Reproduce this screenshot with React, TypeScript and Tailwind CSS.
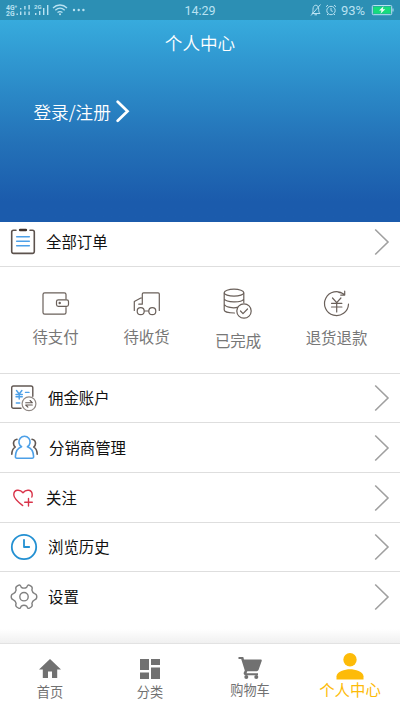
import React from "react";

type IconProps = { box: string; w: number; h: number; color?: string; sw?: number; children: React.ReactNode };

function Icon({ box, w, h, color = "#6a605a", sw = 1.3, children }: IconProps) {
  return (
    <svg viewBox={box} width={w} height={h} fill="none" stroke={color} strokeWidth={sw} strokeLinecap="round" strokeLinejoin="round" className="block shrink-0">
      {children}
    </svg>
  );
}

function StatusBar() {
  return (
    <div className="relative h-5 bg-[#2c8fb4] text-[#b9e2f2]">
      <svg width="90" height="20" viewBox="0 0 90 20" className="block" fill="currentColor">
        <text x="6" y="9.5" fontSize="6.800" fontWeight="bold" fontFamily="Roboto, sans-serif">4G⁺</text>
        <text x="6" y="16" fontSize="6.800" fontWeight="bold" fontFamily="Roboto, sans-serif">2G</text>
        <path d="M16.500 13.500h1.400v1.500h-1.400zM20 11.500h1.400V15H20zM24.200 11.500h1.400V15h-1.400zM28.400 11.500h1.400V15h-1.400zM20 8h1.400v1.500H20zM24.200 6h1.400v3.500h-1.400zM28.400 5h1.400v4.500h-1.400z" />
        <text x="34" y="9" fontSize="6" fontWeight="bold" fontFamily="Roboto, sans-serif">2G</text>
        <path d="M35 13h1.400v2H35zM39 11h1.400v4H39zM43 8h1.400v7H43zM47 5h1.400v10H47z" />
        <g fill="none" stroke="currentColor" strokeWidth="1.300">
          <path d="M53 8c4-4 10-4 14 0M55.300 10.300c3-2.700 6.500-2.700 9.400 0M57.500 12.600c1.700-1.400 3.300-1.400 5 0" />
        </g>
        <circle cx="60" cy="14.300" r="1" />
        <circle cx="74" cy="10" r="1.200" />
        <circle cx="78.700" cy="10" r="1.200" />
        <circle cx="83.400" cy="10" r="1.200" />
      </svg>
      <span className="absolute inset-x-0 top-[1px] text-center font-[Roboto] text-[12.5px] leading-5">14:29</span>
      <div className="absolute right-0 top-0">
        <svg width="92" height="20" viewBox="308 0 92 20" fill="none" stroke="currentColor" strokeWidth="1" className="block">
          <path d="M312 13.500h8c-1.300-1.300-1.300-2.600-1.300-4.300 0-2.400-1.300-4-2.900-4s-2.800 1.600-2.800 4c0 1.700 0 3-1 4.300zM314.500 14.800h2.500M311 15.500l9.500-11" />
          <circle cx="331" cy="10.500" r="4.200" />
          <path d="M331 8v2.700l1.800.7M326 6.800l2-1.800M336 6.800l-2-1.800M328 14l-1 1M334 14l1 1" />
          <text x="341" y="14.500" fontSize="13" stroke="none" fill="currentColor" fontFamily="Roboto, sans-serif">93%</text>
          <rect x="372.300" y="5.500" width="19.400" height="9.200" rx="1" />
          <rect x="373.300" y="6.500" width="17.400" height="7.200" fill="#16dc7c" stroke="none" />
          <path d="M393 8.500v3" />
          <path d="M383.500 6.300l-4.500 4.200h2.500l-1 3.300 4.800-4.500h-2.500z" fill="#e8fff5" stroke="none" />
        </svg>
      </div>
    </div>
  );
}

function Chevron() {
  return (
    <svg width="16" height="28" viewBox="0 0 16 28" fill="none" stroke="#a0a0a0" strokeWidth="1.600" className="ml-auto mr-[10.500px] block shrink-0">
      <path d="M1.200 1.500L14 14 1.200 26.500" />
    </svg>
  );
}

function Row({ icon, label, className }: { icon: React.ReactNode; label: string; className: string }) {
  return (
    <div className={"flex items-center pl-2 text-[15.4px] text-[#111] " + className}>
      {icon}
      <span className="pb-[2px] leading-5">{label}</span>
      <Chevron />
    </div>
  );
}

function Quick({ icon, label, className }: { icon: React.ReactNode; label: string; className: string }) {
  return (
    <div className={"flex flex-col items-center text-[15.4px] leading-5 text-[#777] " + className}>
      {icon}
      <span>{label}</span>
    </div>
  );
}

export default function App() {
  return (
    <div className="flex h-[711px] w-[400px] flex-col overflow-hidden bg-white font-['Noto_Sans_CJK_SC','Noto_Sans',sans-serif]">
      <StatusBar />
      <header className="flex h-[202px] shrink-0 flex-col bg-linear-to-b from-[#37abdd] from-0% via-[#2472b8] via-60% to-[#1b5bac] to-90% text-white">
        <h1 className="pt-[11px] text-center text-[17.6px] font-[350] leading-6">个人中心</h1>
        <div className="mt-[45px] flex items-center pl-[33.5px] text-[17.6px] font-[350] leading-6">
          登录/注册
          <svg width="16" height="24" viewBox="0 0 16 24" fill="none" stroke="white" strokeWidth="2.700" strokeLinecap="round" className="ml-1 block">
            <path d="M2.700 1.800L12.500 11.300 2.700 20.800" />
          </svg>
        </div>
      </header>

      <Row
        className="h-[45px] shrink-0 border-b border-[#dedede] pb-[5px]"
        label="全部订单"
        icon={
          <div className="mr-[6px]">
            <Icon box="8 226 32 32" w={32} h={32} color="#5c524d" sw={1.6}>
              <path d="M16 230.300h-2.500a1.800 1.800 0 0 0-1.800 1.800v19.500a1.800 1.800 0 0 0 1.800 1.800h19a1.800 1.800 0 0 0 1.800-1.800v-19.500a1.800 1.800 0 0 0-1.800-1.800H30" />
              <path d="M20.200 230h5.600" stroke="#40332e" strokeWidth="2.700" />
              <path d="M16.700 236.700h12.600M16.700 241.200h12.600M16.700 245.700h12.600" stroke="#4da0e8" />
            </Icon>
          </div>
        }
      />

      <section className="flex h-[107px] shrink-0 border-b border-[#dedede] pl-[10px] pt-[18px]">
        <Quick
          className="w-[91px] [&>span]:mt-[7px]"
          label="待支付"
          icon={
            <Icon box="40 285 32 34" w={32} h={34} sw={1.2}>
              <path d="M66 299v-4.500a1.700 1.700 0 0 0-1.700-1.700H44.700a1.700 1.700 0 0 0-1.700 1.700v18a1.700 1.700 0 0 0 1.700 1.700h19.600a1.700 1.700 0 0 0 1.700-1.700v-5" />
              <rect x="56.500" y="299.800" width="12" height="6.500" rx="1.800" />
              <circle cx="59.700" cy="303" r=".6" fill="#736a63" />
            </Icon>
          }
        />
        <Quick
          className="w-[91px] [&>span]:mt-[7px]"
          label="待收货"
          icon={
            <Icon box="131 285 32 34" w={32} h={34} sw={1.2}>
              <path d="M134.300 310.500v-9l6.500-3.500h1.500V294a1.200 1.200 0 0 1 1.200-1.200h14.600a1.200 1.200 0 0 1 1.200 1.200v16.500M142.300 298v6.200h-3.500" />
              <circle cx="140.700" cy="311.200" r="3.500" />
              <circle cx="152.300" cy="311.200" r="3.500" />
              <path d="M144.500 311h4" />
            </Icon>
          }
        />
        <Quick
          className="w-[92px] [&>span]:mt-[11px]"
          label="已完成"
          icon={
            <Icon box="222 285 32 34" w={32} h={34} sw={1.2}>
              <ellipse cx="234" cy="292.700" rx="9.800" ry="3.500" />
              <path d="M224.200 293v17c0 1.500 4 3 10.300 3M224.200 299c2 3.500 17 4.200 19.600 0M224.200 304.500c2 3 9 4 14 2.700M243.800 293v9.500" />
              <circle cx="244" cy="311" r="7.200" fill="white" />
              <path d="M240.500 311l2.500 2.600 4.500-4.600" />
            </Icon>
          }
        />
        <Quick
          className="w-[105px] [&>span]:mt-[8px]"
          label="退货退款"
          icon={
            <Icon box="321 285 32 34" w={32} h={34} sw={1.2}>
              <path d="M344 294.200a12 12 0 1 0 4.500 10M338.500 292.300c2 .2 3.800.8 5.500 1.900M344.700 291.200v3.900h-4" />
              <path d="M332.500 298l4.200 4.700 4.200-4.700M336.700 303v9M331.500 303.300h10.400M331.500 307h10.400" />
            </Icon>
          }
        />
      </section>

      <Row
        className="h-[49px] shrink-0 border-b border-[#dedede]"
        label="佣金账户"
        icon={
          <div className="mr-[8px]">
            <Icon box="8 382 32 32" w={32} h={32} color="#625853" sw={1.4}>
              <path d="M21 408.300h-7.500a1.800 1.800 0 0 1-1.800-1.800v-18.700a1.800 1.800 0 0 1 1.800-1.800h17.500a1.800 1.800 0 0 1 1.800 1.800v8.500" />
              <path d="M16.500 390.500l2.700 3.500 2.700-3.500M19.200 394v5M16 394.500h6.300M16 396.800h6.300M25.500 392.400h3.500M16.300 403h3.500" stroke="#4da0e8" />
              <circle cx="29" cy="403.700" r="6.900" stroke="#8f8884" strokeWidth="1.200" fill="white" />
              <path d="M25.700 402.700h6.600l-2.200-2.200M32.300 405h-6.600l2.200 2.200" strokeWidth="1.100" />
            </Icon>
          </div>
        }
      />
      <Row
        className="h-[50px] shrink-0 border-b border-[#dedede]"
        label="分销商管理"
        icon={
          <div className="mr-[9px]">
            <Icon box="8 432 32 32" w={32} h={32} color="#625853" sw={1.6}>
              <path d="M17 439.300c-2.800.3-4.100 3-3.200 5.600.3 1 .9 1.600 1.400 2.200-2.500 1.300-3.300 3.600-3.400 7.200M32 439.300c2.800.3 4.100 3 3.200 5.600-.3 1-.9 1.600-1.400 2.200 2.500 1.300 3.300 3.600 3.400 7.200" />
              <path d="M21.600 446.700c-4.700 1.500-6 5-6.200 9.800a1.500 1.500 0 0 0 1.500 1.700h15.200a1.500 1.500 0 0 0 1.500-1.700c-.2-4.800-1.500-8.300-6.200-9.800a5.600 5.600 0 1 0-5.800 0z" stroke="#4da0e8" strokeWidth="1.600" />
            </Icon>
          </div>
        }
      />
      <Row
        className="h-[50px] shrink-0 border-b border-[#dedede]"
        label="关注"
        icon={
          <div className="mr-[6px]">
            <Icon box="8 481 32 32" w={32} h={32} color="#d9344a" sw={1.4}>
              <path d="M22.700 504.500c-3.700-2.800-8.700-6.500-8.900-10.500-.2-5.600 6-6.200 9.200-2.200 3.200-4 9.300-3.400 9.200 2.200 0 .8-.1 1.300-.4 2M28.500 497.500v7.500M24.700 501.300h7.600" />
            </Icon>
          </div>
        }
      />
      <Row
        className="h-[49px] shrink-0 border-b border-[#dedede]"
        label="浏览历史"
        icon={
          <div className="mr-[8px]">
            <Icon box="8 531 32 32" w={32} h={32} color="#2390d2" sw={1.8}>
              <circle cx="24" cy="547" r="12.200" />
              <path d="M24 539.800v7.200h5.200" />
            </Icon>
          </div>
        }
      />
      <Row
        className="h-[50px] shrink-0"
        label="设置"
        icon={
          <div className="mr-[8px]">
            <Icon box="8 581 32 32" w={32} h={32} color="#808080" sw={1.4}>
              <circle cx="24" cy="596.700" r="4.200" />
              <path d="M21.300 587.300q2.700 1.700 5.400 0c1-2.500 1.700-2.700 3-1.900l1.600 1c1.300.8 1.300 1.500.6 3.700q.5 2.500 2.700 3.500c2.100.6 2.200 1.300 2.200 3.100s-.1 2.500-2.200 3.100q-2.200 1-2.700 3.500c.7 2.200.7 2.900-.6 3.700l-1.600 1c-1.300.8-2 .6-3-1.900q-2.700-1.700-5.400 0c-1 2.500-1.700 2.700-3 1.900l-1.600-1c-1.300-.8-1.300-1.500-.6-3.700q-.5-2.500-2.700-3.500c-2.100-.6-2.200-1.300-2.200-3.100s.1-2.500 2.200-3.100q2.200-1 2.700-3.500c-.7-2.200-.7-2.900.6-3.700l1.600-1c1.300-.8 2-.6 3 1.900z" />
            </Icon>
          </div>
        }
      />

      <div className="mt-auto h-[14px] shrink-0 bg-linear-to-b from-white to-[#f0f0f0]" />
      <nav className="flex h-[68px] shrink-0 border-t border-[#e2e2e2] bg-white text-[13.2px] leading-4 text-[#717171]">
        <div className="flex w-[100px] flex-col items-center pt-[13px]">
          <svg width="24" height="24" viewBox="0 0 24 24" fill="currentColor"><path d="M10 21v-6.500h4V21h5.200v-8.500H23L12 2 1 12.500h3.800V21z" /></svg>
          <span className="mt-[3px]">首页</span>
        </div>
        <div className="flex w-[100px] flex-col items-center pt-[14px]">
          <svg width="22" height="22" viewBox="0 0 22 22" fill="currentColor"><path d="M1 1h9v11H1zM12 1h9v6h-9zM1 14.500h9V21H1zM12 9.500h9V21h-9z" /></svg>
          <span className="mt-1">分类</span>
        </div>
        <div className="flex w-[100px] flex-col items-center pt-[12px]">
          <svg width="24" height="24" viewBox="0 0 24 24" fill="currentColor">
            <path d="M.5 1v2h2.700l3.600 11.500-1 2c-.5 1.300.2 2.700 1.700 2.700H20v-2H8.500l.8-2h9.500c.8 0 1.400-.4 1.700-1.100L23.700 5c.3-.8-.2-1.500-1-1.500H6L5.300 1z" />
            <circle cx="8.300" cy="21" r="2" /><circle cx="18.300" cy="21" r="2" />
          </svg>
          <span className="mt-[2px]">购物车</span>
        </div>
        <div className="flex w-[100px] flex-col items-center pt-[8px] text-[15.4px] leading-5 text-[#fdbb08]">
          <svg width="28" height="28" viewBox="0 0 28 28" fill="currentColor"><circle cx="14" cy="7.700" r="6.700" /><path d="M.5 27.500v-3.200c0-4.600 8.500-7 13.500-7s13.500 2.400 13.500 7v3.200z" /></svg>
          <span className="-mt-px">个人中心</span>
        </div>
      </nav>
    </div>
  );
}
